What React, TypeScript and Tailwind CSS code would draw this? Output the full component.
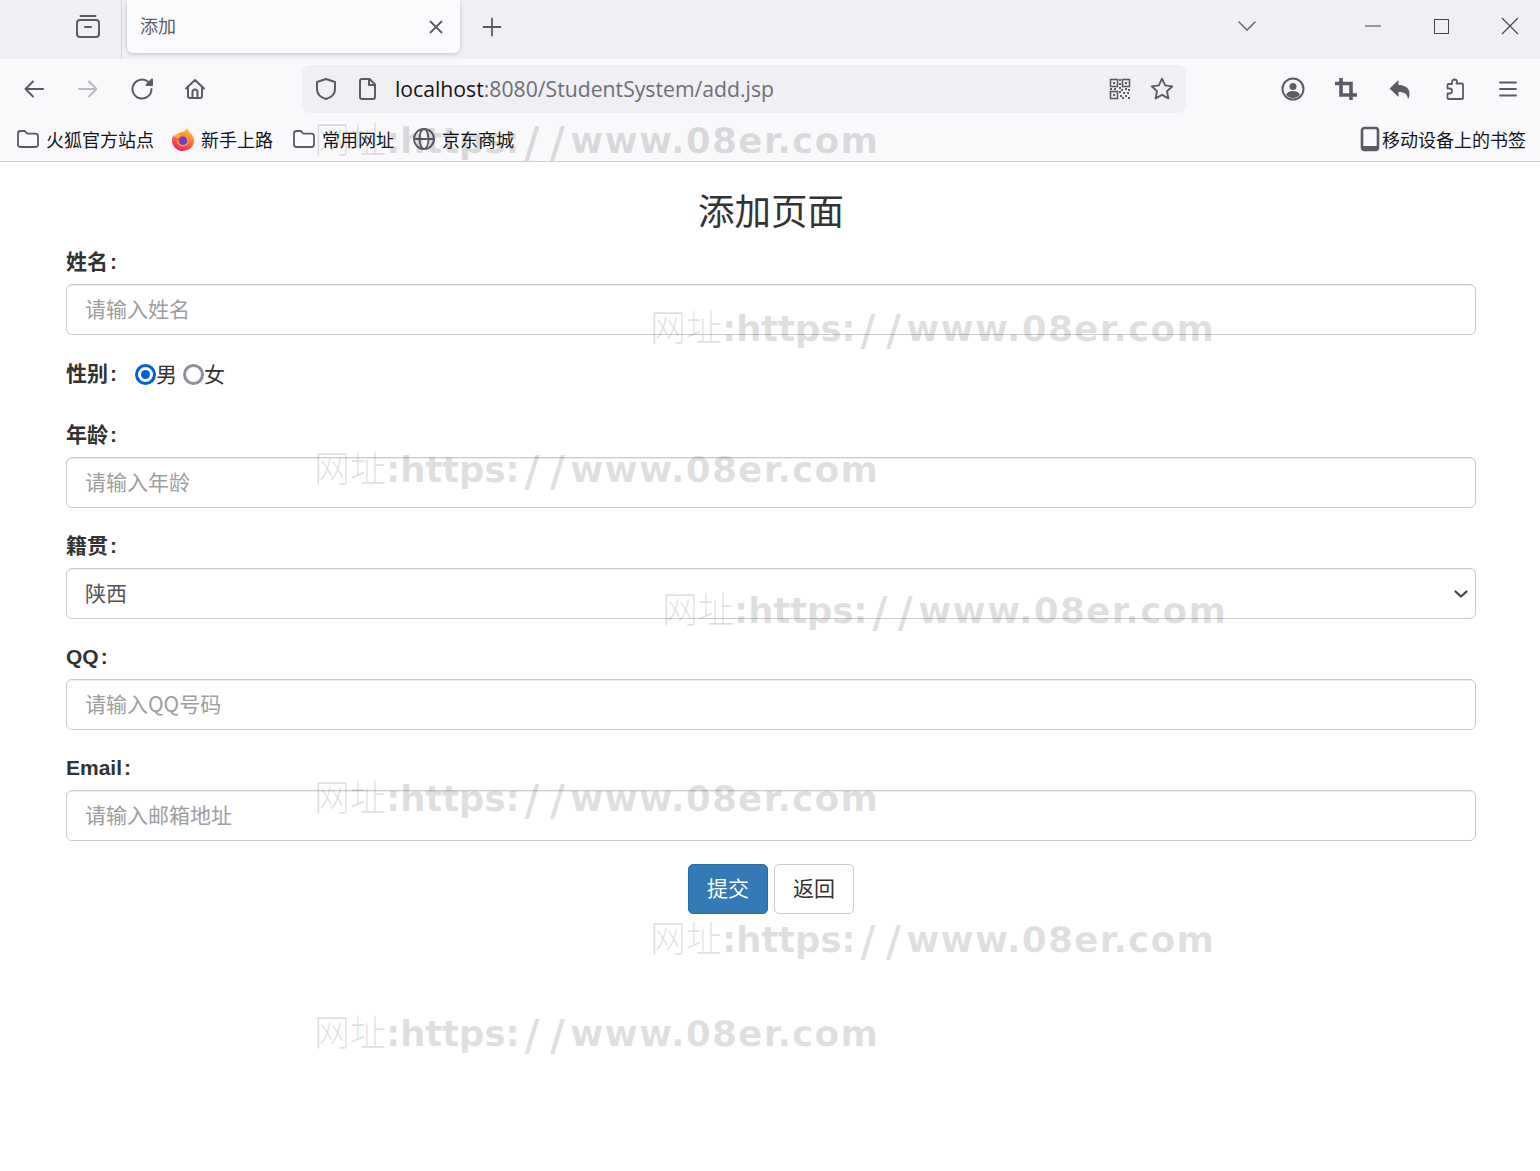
import React from "react";

const CJK = "font-['Noto_Sans_CJK_SC','Noto_Sans',sans-serif]";
const ic = "#5b5b66";

function S({ size = 24, children, fill = "none", sw = 2, color = ic }: { size?: number; children: React.ReactNode; fill?: string; sw?: number; color?: string }) {
  return (
    <svg width={size} height={size} viewBox="0 0 24 24" fill={fill} stroke={fill === "none" ? color : "none"} strokeWidth={sw} strokeLinecap="round" strokeLinejoin="round" className="shrink-0">
      {children}
    </svg>
  );
}

const Folder = () => (
  <svg width="24" height="24" viewBox="0 0 24 24" fill="none" stroke={ic} strokeWidth="1.8" strokeLinejoin="round" className="shrink-0">
    <path d="M2 6.5A2.5 2.5 0 0 1 4.5 4h4.2l2.6 2.6h8.2A2.5 2.5 0 0 1 22 9.100v8.400a2.500 2.500 0 0 1-2.500 2.500h-15A2.500 2.500 0 0 1 2 17.500z" />
  </svg>
);

const FoxLogo = () => (
  <svg width="24" height="24" viewBox="0 0 24 24" className="shrink-0">
    <defs>
      <linearGradient id="fx" x1="0.7" y1="0" x2="0.3" y2="1">
        <stop offset="0" stopColor="#ffd02e" />
        <stop offset="0.45" stopColor="#ff7a2e" />
        <stop offset="1" stopColor="#e8206e" />
      </linearGradient>
    </defs>
    <path d="M16 0.500c.3 2.500 2 3.500 3.500 5.500 2 2.500 3.500 4.500 3.500 7.500a11 10.500 0 0 1-22 0c0-2.400.7-4.300 1.700-5.700.3 1 .8 1.700 1.500 2.200C5.500 7.500 7 5.800 9.500 5.500 12 5 15.500 3.500 16 .5z" fill="url(#fx)" />
    <path d="M6 13.500a6 6 0 0 0 12 0c0-3-2.200-5.500-5-5.800 1.500 1 2 2.200 1.800 3.300" fill="#ff9a2e" />
    <circle cx="12" cy="13.800" r="4.300" fill="#6b3fd4" />
    <path d="M3.500 7.500c2.500-1 5.500-.7 7.500 1-2 .2-3.500 1.300-4 2.800-1.500-.5-3-2-3.500-3.800z" fill="#ffb02e" />
  </svg>
);

function Mark({ className }: { className: string }) {
  return (
    <div className={"absolute z-10 pointer-events-none whitespace-nowrap text-[rgba(0,0,0,0.125)] leading-[40px] h-[40px] text-[36px] flex items-baseline " + className}>
      <span className={CJK + " font-light ml-[-1px] text-[36px]"}>网址</span>
      <span className="font-['DejaVu_Sans',sans-serif] font-bold text-[36px] tracking-[-0.4px]">:https:</span>
      <span className="font-['DejaVu_Sans',sans-serif] font-bold text-[42px] inline-block w-[25.500px] text-center translate-y-[4px]">/</span>
      <span className="font-['DejaVu_Sans',sans-serif] font-bold text-[42px] inline-block w-[25.500px] text-center translate-y-[4px]">/</span>
      <span className="font-['DejaVu_Sans',sans-serif] font-bold text-[36px] tracking-[1.1px]">www.08er.com</span>
    </div>
  );
}

function Label({ text }: { text: string }) {
  return (
    <label className="block h-[22px] mb-[11px] text-[21px] leading-[22px] font-bold text-[#333]">
      {text}<span className="ml-[2px]">:</span>
    </label>
  );
}

function Field({ label, placeholder }: { label: string; placeholder: string }) {
  return (
    <div className="mb-[27px]">
      <Label text={label} />
      <input
        placeholder={placeholder}
        className={"block w-full h-[51px] rounded-[6px] border border-[#ccc] bg-white pl-[18px] pr-[18px] pb-[4px] text-[21px] text-[#555] shadow-[inset_0_1px_1px_rgba(0,0,0,0.075)] outline-none placeholder:text-[#9e9e9e] " + CJK}
      />
    </div>
  );
}

function Bookmark({ icon, text, gap = "gap-[5px]" }: { icon: React.ReactNode; text: string; gap?: string }) {
  return (
    <div className={"flex items-center text-[18px] text-[#15141a] " + gap}>
      {icon}
      <span>{text}</span>
    </div>
  );
}

export default function App() {
  return (
    <div className={"relative min-h-[1171px] w-[1540px] bg-white overflow-hidden font-['Liberation_Sans','Noto_Sans_CJK_SC',sans-serif]"}>
      {/* tab strip */}
      <div className="flex h-[59px] bg-[#f0f0f4]">
        <div className="flex h-[59px] w-[122px] shrink-0 items-start border-r border-[#d4d4d8] pl-[75px] pt-[13px]">
          <svg width="26" height="26" viewBox="0 0 26 26" fill="none" stroke={ic} strokeWidth="2" strokeLinecap="round" className="shrink-0">
            <rect x="2" y="7" width="22" height="17" rx="3" />
            <path d="M5.500 3h15M10 14h6" />
          </svg>
        </div>
        <div className="ml-[5px] flex h-[53px] w-[333px] shrink-0 items-center justify-between rounded-b-[6px] bg-[#fbfbfe] pl-[13px] pr-[15px] shadow-[0_1px_4px_rgba(0,0,0,0.2)]">
          <span className={"text-[18px] pb-[2px] text-[#5b5b66] " + CJK}>添加</span>
          <svg width="18" height="18" viewBox="0 0 18 18" stroke={ic} strokeWidth="1.800" strokeLinecap="round"><path d="M3.500 3.500l11 11M14.500 3.500l-11 11" /></svg>
        </div>
        <div className="ml-[21px] flex h-[53px] items-center">
          <svg width="22" height="22" viewBox="0 0 22 22" stroke={ic} strokeWidth="1.800" strokeLinecap="round"><path d="M11 2.500v17M2.500 11h17" /></svg>
        </div>
        <div className="flex flex-1 h-[52px] items-center">
          <div className="ml-[734px]">
            <svg width="20" height="12" viewBox="0 0 20 12" fill="none" stroke="#6d6d75" strokeWidth="1.600" strokeLinecap="round"><path d="M2 2l8 8 8-8" /></svg>
          </div>
          <div className="ml-[108px]">
            <svg width="16" height="2" viewBox="0 0 16 2"><path d="M0 1h16" stroke="#444" strokeWidth="1" /></svg>
          </div>
          <div className="ml-[53px]">
            <svg width="15" height="15" viewBox="0 0 15 15" fill="none"><rect x="0.500" y="0.500" width="14" height="14" stroke="#444" /></svg>
          </div>
          <div className="ml-[52px]">
            <svg width="18" height="18" viewBox="0 0 18 18" stroke="#444" strokeWidth="1.100"><path d="M1 1l16 16M17 1L1 17" /></svg>
          </div>
        </div>
      </div>

      {/* nav bar */}
      <div className="flex h-[61px] items-start bg-[#f9f9fb] pt-[6px]">
        <div className="flex h-[48px] items-center pl-[22px]">
          <S><path d="M21 12H3.500M11 4.500L3.500 12l7.500 7.500" /></S>
          <div className="ml-[30px] flex">
            <S color="#b9b9be"><path d="M3 12h17.500M13 4.500l7.500 7.500-7.500 7.500" /></S>
          </div>
          <div className="ml-[31px] flex">
            <S><path d="M20.500 12a9.500 9.500 0 1 1-3-6.900L20 7.500" /><path d="M21 2.500V8h-5.500z" fill={ic} /></S>
          </div>
          <div className="ml-[28px] flex">
            <S><path d="M3 11.500L12 3l9 8.500M5 9.500V19a2 2 0 0 0 2 2h10a2 2 0 0 0 2-2V9.500M9.500 21v-6a2.500 2.500 0 0 1 5 0v6" /></S>
          </div>
        </div>
        <div className="ml-[95px] flex h-[48px] w-[884px] shrink-0 items-center rounded-[8px] bg-[#f0f0f4] pl-[12px] pr-[11px]">
          <S><path d="M12 2l9 3v7c0 5-4 8.500-9 10-5-1.500-9-5-9-10V5z" /></S>
          <div className="ml-[18px] flex">
            <S><path d="M6 2h7.500L19 7.500V20a2 2 0 0 1-2 2H6a2 2 0 0 1-2-2V4a2 2 0 0 1 2-2zM13 2v6h6" /></S>
          </div>
          <div className="ml-[15px] text-[21.2px] font-['Open_Sans','Noto_Sans',sans-serif] whitespace-nowrap flex-1">
            <span className="text-[#15141a]">localhost</span>
            <span className="text-[#6e6e76]">:8080/StudentSystem/add.jsp</span>
          </div>
          <svg width="24" height="24" viewBox="0 0 24 24" fill="none" stroke={ic} strokeWidth="1.600" className="shrink-0">
            <rect x="2.500" y="2.500" width="7" height="7" /><rect x="14.500" y="2.500" width="7" height="7" /><rect x="2.500" y="14.500" width="7" height="7" />
            <path d="M5 5h2v2H5zM17 5h2v2h-2zM5 17h2v2H5z" fill={ic} stroke="none" />
            <path d="M11 2h2v2h-2zM11 6h2v2h-2zM11 10h2v2h-2zM13 12h2v2h-2zM17 11h2v2h-2zM20 12h2v2h-2zM11 14h2v2h-2zM15 15h2v2h-2zM19 15h2v2h-2zM12 18h2v2h-2zM17 18h2v2h-2zM14 20h2v2h-2zM20 20h2v2h-2zM2 11h2v2H2zM6 11h2v2H6z" fill={ic} stroke="none" />
          </svg>
          <div className="ml-[17px] flex">
            <S size={26} sw={1.700}><path d="M12 2.500l2.900 6.200 6.600.8-4.900 4.600 1.300 6.600-5.900-3.300-5.900 3.300 1.300-6.600L2.500 9.500l6.600-.8z" /></S>
          </div>
        </div>
        <div className="flex h-[48px] flex-1 items-center pl-[95px]">
          <S><circle cx="12" cy="12" r="10.500" /><circle cx="12" cy="9.500" r="3.500" fill={ic} stroke="none" /><path d="M5 17.500c1.500-2.500 4-3.500 7-3.500s5.500 1 7 3.500c-1.500 2-4 3.500-7 3.500s-5.500-1.500-7-3.500z" fill={ic} stroke="none" /></S>
          <div className="ml-[29px] flex">
            <svg width="24" height="24" viewBox="0 0 24 24" fill="none" stroke={ic} strokeWidth="3.600"><path d="M7 1v17h16M1 6.500h16V23" /></svg>
          </div>
          <div className="ml-[30px] flex">
            <svg width="24" height="24" viewBox="0 0 24 24" fill={ic}><path d="M10.500 3v5c6 0 11 2.500 11 9 0 2-.5 3.500-1.500 5-.5-4.500-3-7-9.500-7v5L1.500 11.500z" /></svg>
          </div>
          <div className="ml-[30px] flex">
            <S sw={1.800}><path d="M14.500 6.500H20a1 1 0 0 1 1 1V21a1 1 0 0 1-1 1H6.500a1 1 0 0 1-1-1v-4.500h2a2.500 2.500 0 0 0 0-5h-2V8a1 1 0 0 1 1-1h3.500V5a2.500 2.500 0 0 1 5 0z" /></S>
          </div>
          <div className="ml-[30px] flex">
            <svg width="24" height="24" viewBox="0 0 24 24" stroke={ic} strokeWidth="1.800" strokeLinecap="round"><path d="M4 5.500h16M4 12h16M4 18.500h16" /></svg>
          </div>
        </div>
      </div>

      {/* bookmarks bar */}
      <div className={"flex h-[42px] items-center border-b border-[#cfcfd8] bg-[#f9f9fb] pb-[3px] pl-[16px] pr-[14px] " + CJK}>
        <Bookmark icon={<Folder />} text="火狐官方站点" gap="gap-[6px]" />
        <div className="ml-[17px]"><Bookmark icon={<FoxLogo />} text="新手上路" gap="gap-[6px]" /></div>
        <div className="ml-[19px]"><Bookmark icon={<Folder />} text="常用网址" gap="gap-[6px]" /></div>
        <div className="ml-[18px]">
          <Bookmark
            gap="gap-[6px]"
            icon={<S sw={1.800}><circle cx="12" cy="12" r="10" /><ellipse cx="12" cy="12" rx="4.500" ry="10" /><path d="M2 12h20" /></S>}
            text="京东商城"
          />
        </div>
        <div className="ml-auto flex items-center">
          <svg width="20" height="26" viewBox="0 0 20 26" className="shrink-0">
            <rect x="2" y="2" width="16" height="22" rx="2.500" fill="none" stroke={ic} strokeWidth="2.600" />
            <path d="M2 20h16v2a2 2 0 0 1-2 2H4a2 2 0 0 1-2-2z" fill={ic} />
          </svg>
          <span className="ml-[2px] text-[18px] text-[#15141a]">移动设备上的书签</span>
        </div>
      </div>

      {/* page */}
      <main className="px-[66px] pt-[22px] pr-[64px]">
        <h1 className={"h-[52px] mb-[15px] text-center text-[36.5px] leading-[52px] font-normal text-[#333] " + CJK}>添加页面</h1>
        <form>
          <Field label="姓名" placeholder="请输入姓名" />
          <div className="mb-[38px] flex h-[24px] items-center text-[21px] text-[#333]">
            <span className="font-bold">性别<span className="ml-[2px]">:</span></span>
            <span className="ml-[18px] box-border h-[21px] w-[21px] shrink-0 rounded-full border-[3px] border-[#0060df] flex items-center justify-center">
              <span className="block h-[9px] w-[9px] rounded-full bg-[#0060df]" />
            </span>
            <span className={CJK}>男</span>
            <span className="ml-[6px] box-border h-[21px] w-[21px] shrink-0 rounded-full border-[3px] border-[#8f8f9d] bg-white" />
            <span className={CJK}>女</span>
          </div>
          <Field label="年龄" placeholder="请输入年龄" />
          <div className="mb-[27px]">
            <Label text="籍贯" />
            <div className={"flex h-[51px] w-full items-center justify-between rounded-[6px] border border-[#ccc] bg-white pl-[18px] pr-[6px] text-[21px] text-[#555] shadow-[inset_0_1px_1px_rgba(0,0,0,0.075)] " + CJK}>
              <span className="pb-[2px]">陕西</span>
              <svg width="16" height="10" viewBox="0 0 16 10" fill="none" stroke="#444" strokeWidth="2.200" strokeLinecap="round" strokeLinejoin="round"><path d="M2.500 2.500L8 7.500l5.500-5" /></svg>
            </div>
          </div>
          <Field label="QQ" placeholder="请输入QQ号码" />
          <Field label="Email" placeholder="请输入邮箱地址" />
          <div className={"mt-[-4px] flex ml-[622px] gap-[6px] " + CJK}>
            <button type="button" className="h-[50px] w-[80px] rounded-[5px] border border-[#2e6da4] bg-[#337ab7] pb-[2px] text-[21px] text-white">提交</button>
            <button type="button" className="h-[50px] w-[80px] rounded-[5px] border border-[#ccc] bg-white pb-[2px] text-[21px] text-[#333]">返回</button>
          </div>
        </form>
      </main>

      <Mark className="left-[315px] top-[117px]" />
      <Mark className="left-[651px] top-[305px]" />
      <Mark className="left-[315px] top-[446px]" />
      <Mark className="left-[663px] top-[587px]" />
      <Mark className="left-[315px] top-[775px]" />
      <Mark className="left-[651px] top-[916px]" />
      <Mark className="left-[315px] top-[1010px]" />
    </div>
  );
}
